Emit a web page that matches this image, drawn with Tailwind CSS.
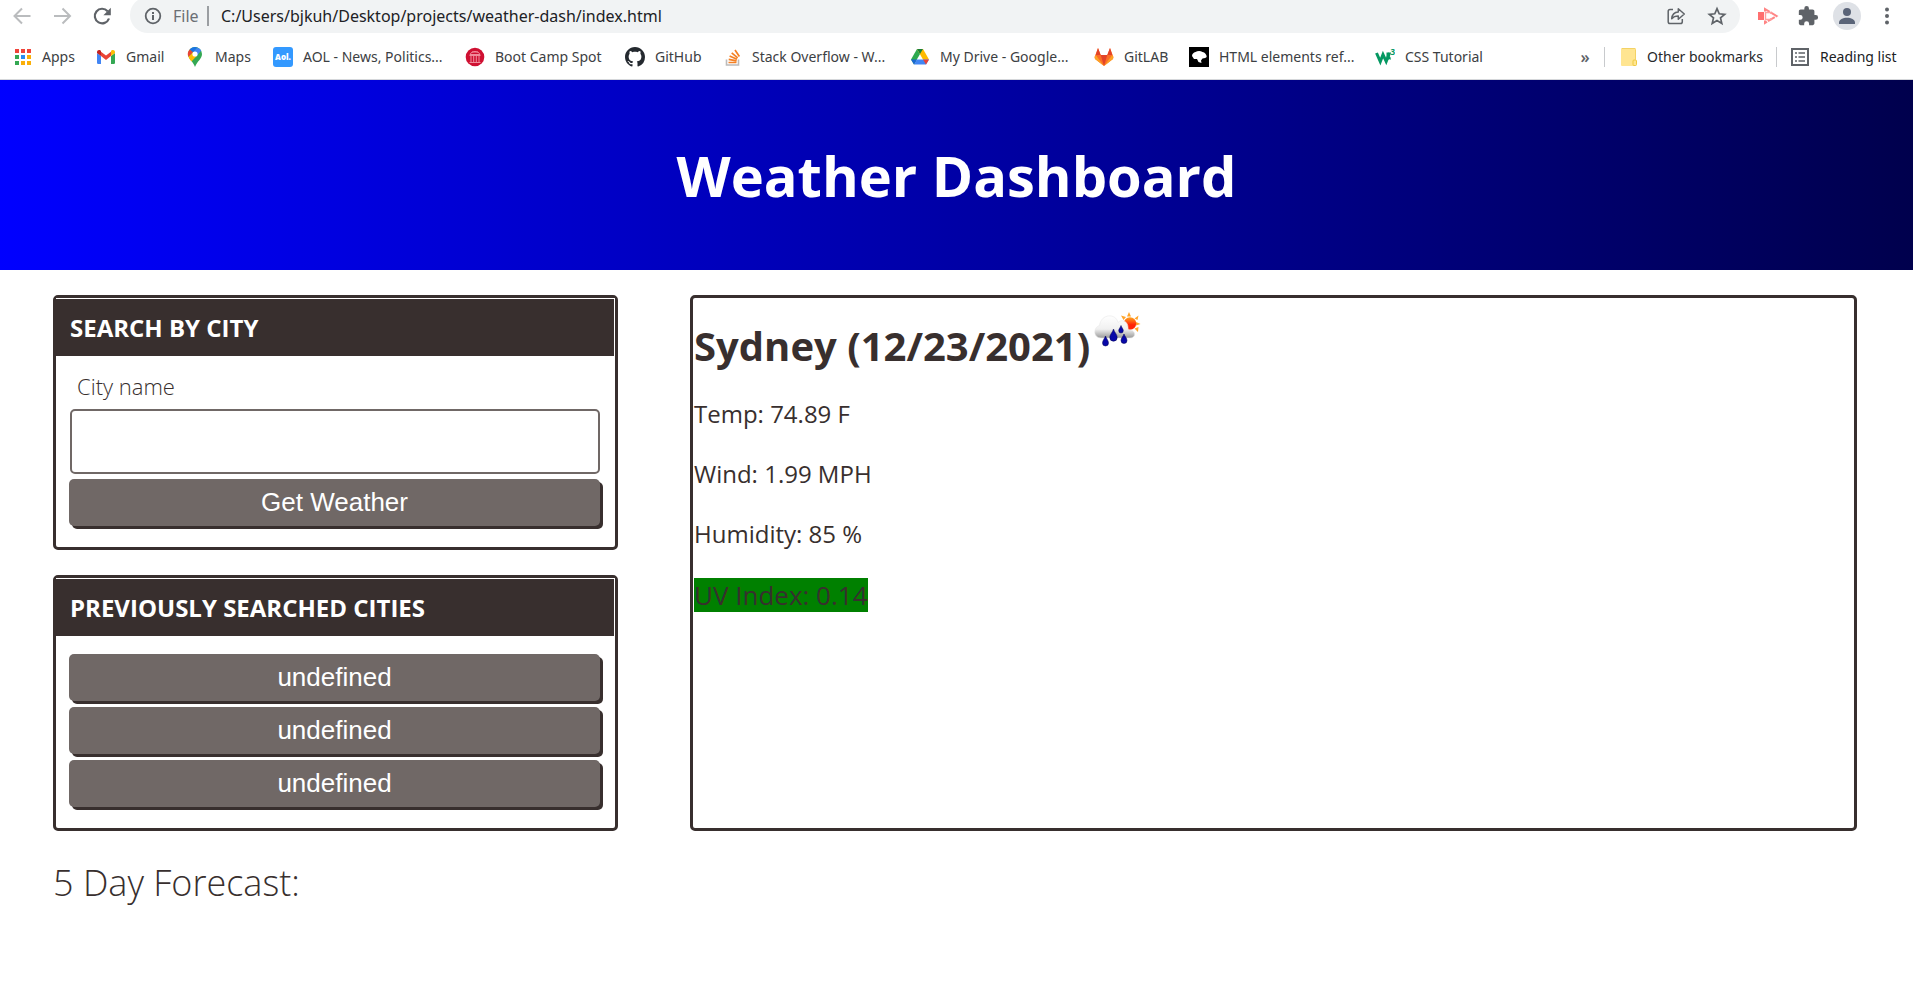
<!DOCTYPE html>
<html lang="en">
<head>
<meta charset="utf-8">
<title>Weather Dashboard</title>
<script src="https://cdn.jsdelivr.net/npm/@tailwindcss/browser@4"></script>
</head>
<body class="min-h-screen bg-white font-['Open_Sans','Noto_Sans',sans-serif] text-[#382f2e]">
<div class="overflow-hidden border-b border-[#d5d7da] bg-white font-['Noto_Sans',sans-serif] text-[#3c4043]">
  <div class="flex h-[34px] items-center">
    <nav class="flex h-8 w-[130px] shrink-0 items-center gap-5 self-start pl-3 text-[#babcbe]" aria-label="Navigation">
      <button aria-label="Back"><svg class="size-5" viewBox="0 0 20 20" fill="none" stroke="currentColor" stroke-width="2"><path d="M18.500 10H3M10 2.500L2.500 10l7.500 7.500"/></svg></button>
      <button aria-label="Forward"><svg class="size-5" viewBox="0 0 20 20" fill="none" stroke="currentColor" stroke-width="2"><path d="M2 10h15.500M10.500 2.500L18 10l-7.500 7.500"/></svg></button>
      <button class="text-[#5f6368]" aria-label="Reload"><svg class="size-5" viewBox="0 0 20 20"><path d="M17 12.500A7.300 7.300 0 1 1 15.600 5.200" fill="none" stroke="currentColor" stroke-width="2.200"/><path d="M18.800 1.800v7.400h-7.400z" fill="currentColor"/></svg></button>
    </nav>
    <div class="-mt-1 flex h-9 flex-1 items-center rounded-full bg-[#f1f3f4] pt-[2px] pr-[13px] pl-[14px]">
      <svg class="size-[18px] shrink-0" viewBox="0 0 18 18"><circle cx="9" cy="9" r="7.300" fill="none" stroke="#5f6368" stroke-width="1.800"/><path d="M8 8h2v5H8zM8 5h2v2H8z" fill="#5f6368"/></svg>
      <span class="ml-[11px] w-[34px] text-base text-[#6b6f74]">File</span>
      <span class="h-5 w-[2px] bg-[#9b9ea2]"></span>
      <span class="ml-3 flex-1 text-base whitespace-nowrap text-[#202124]">C:/Users/bjkuh/Desktop/projects/weather-dash/index.html</span>
      <button aria-label="Share"><svg class="size-5" viewBox="0 0 20 20" fill="none" stroke="#5f6368" stroke-width="1.500" stroke-linejoin="round"><path d="M7 3.500H4a1.800 1.800 0 0 0-1.800 1.800v10.400A1.800 1.800 0 0 0 4 17.500h10.500a1.800 1.800 0 0 0 1.800-1.800V13"/><path d="M5.700 12.700c.4-4.300 2.800-6.500 6.600-6.700V2.700l6 5.300-6 5.200V10c-3 0-5 .7-6.600 2.700z"/></svg></button>
      <button class="ml-[21px]" aria-label="Bookmark this page"><svg class="size-5" viewBox="0 0 20 20" fill="none" stroke="#5f6368" stroke-width="1.700"><path d="M10 2.700l2.200 5.100 5.500.5-4.200 3.600 1.300 5.500-4.800-2.900-4.800 2.900 1.300-5.500-4.200-3.600 5.500-.5z"/></svg></button>
    </div>
    <div class="flex h-8 w-[173px] shrink-0 items-center self-start pl-[17px]">
      <button aria-label="Screen recorder"><svg class="h-[18px] w-[22px]" viewBox="0 0 22 18"><path d="M1 5h6v8H1z" fill="#ff7070"/><path d="M8 4.500V2l11.500 7L8 16v-2.500" fill="none" stroke="#ff8585" stroke-width="2" stroke-dasharray="8 1"/><path d="M14 7V5.500H8.500v7H14V11" fill="none" stroke="#ffa0a0" stroke-width="1.400"/></svg></button>
      <button class="ml-[18px]" aria-label="Extensions"><svg class="size-[22px]" viewBox="0 0 24 24" fill="#5f6368"><path d="M20.500 11H19V7c0-1.100-.9-2-2-2h-4V3.500a2.500 2.500 0 0 0-5 0V5H4c-1.100 0-2 .9-2 2v3.800h1.500a2.700 2.700 0 0 1 0 5.400H2V20c0 1.100.9 2 2 2h3.800v-1.500a2.700 2.700 0 0 1 5.400 0V22H17c1.100 0 2-.9 2-2v-4h1.500a2.500 2.500 0 0 0 0-5z"/></svg></button>
      <button class="ml-[14px]" aria-label="Profile"><svg class="size-7" viewBox="0 0 28 28"><circle cx="14" cy="14" r="14" fill="#dee1e6"/><circle cx="14" cy="10" r="4" fill="#5a6478"/><path d="M6 22v-1.500c0-3 4-4.800 8-4.800s8 1.800 8 4.800V22z" fill="#5a6478"/></svg></button>
      <button class="ml-4" aria-label="Menu"><svg class="size-5" viewBox="0 0 20 20" fill="#5f6368"><circle cx="10" cy="3.500" r="2"/><circle cx="10" cy="10" r="2"/><circle cx="10" cy="16.500" r="2"/></svg></button>
    </div>
  </div>
  <nav class="flex h-[45px] items-center pl-[14px] text-sm whitespace-nowrap" aria-label="Bookmarks">
    <a href="#" class="flex w-[82px] items-center gap-[10px]"><svg class="size-[18px] shrink-0" viewBox="0 0 18 18"><path d="M1 1h4v4H1zM7 1h4v4H7zM13 1h4v4h-4z" fill="#f0443a"/><path d="M1 7h4v4H1z" fill="#34a853"/><path d="M7 7h4v4H7z" fill="#2a8bf2"/><path d="M13 7h4v4h-4z" fill="#fbaf08"/><path d="M1 13h4v4H1z" fill="#34a853"/><path d="M7 13h4v4H7zM13 13h4v4h-4z" fill="#fbaf08"/></svg>Apps</a>
    <a href="#" class="flex w-[89px] items-center gap-[10px]"><svg class="size-5 shrink-0" viewBox="0 0 20 20"><path d="M1 6l4 3v8H2.200A1.200 1.200 0 0 1 1 15.800z" fill="#4285f4"/><path d="M15 9l4-3v9.800a1.200 1.200 0 0 1-1.200 1.200H15z" fill="#34a853"/><path d="M5 4.800l5 3.800 5-3.800V9l-5 4-5-4z" fill="#ea4335"/><path d="M1 6V5c0-2 2-2.600 3.300-1.700L5 3.900V9z" fill="#c5221f"/><path d="M15 9V3.900l.7-.6C17 2.400 19 3 19 5v1z" fill="#fbbc04"/></svg>Gmail</a>
    <a href="#" class="flex w-[88px] items-center gap-[10px]"><svg class="size-5 shrink-0" viewBox="0 0 20 20"><path d="M10 0a7 7 0 0 1 7 7c0 5-5 7-7 13C8 14 3 12 3 7a7 7 0 0 1 7-7z" fill="#34a853"/><path d="M10 0C7.800 0 6 1 4.700 2.500L8 5.300 12.300.4A8 8 0 0 0 10 0z" fill="#1a73e8"/><path d="M4.700 2.500A6.700 6.700 0 0 0 3.500 10L8 5.200z" fill="#ea4335"/><path d="M12.300.4L8 5.300l3.800 3.600L16.200 3.600A7 7 0 0 0 12.300.4z" fill="#4285f4"/><path d="M3.500 9.800L8 5.200l3.700 3.800-5.200 5.500c-1.300-1.600-2.400-2.800-3-4.700z" fill="#fbbc04"/><circle cx="10" cy="7" r="2.600" fill="#fff"/></svg>Maps</a>
    <a href="#" class="flex w-[192px] items-center gap-[10px]"><svg class="size-5 shrink-0" viewBox="0 0 20 20"><rect width="20" height="20" rx="3" fill="#3399ff"/><text x="10" y="13" text-anchor="middle" font-family="Open Sans" font-weight="800" font-size="8" fill="#fff">Aol.</text></svg>AOL - News, Politics...</a>
    <a href="#" class="flex w-[160px] items-center gap-[10px]"><svg class="size-5 shrink-0" viewBox="0 0 20 20"><circle cx="10" cy="10" r="9.300" fill="#cf1032"/><path d="M5 7.500C6.500 3.500 13.500 3.500 15 7.500zM4.500 8.500h11M6 9v6M8.700 9v6M11.300 9v6M14 9v6M4.500 15.500h11M7 5h6" fill="none" stroke="#f08a9a" stroke-width="1"/></svg>Boot Camp Spot</a>
    <a href="#" class="flex w-[97px] items-center gap-[10px]"><svg class="size-5 shrink-0" viewBox="0 0 16 16" fill="#24292f"><path d="M8 0C3.580 0 0 3.580 0 8c0 3.540 2.290 6.530 5.470 7.590.4.070.55-.17.55-.38 0-.19-.01-.82-.01-1.490-2.010.37-2.530-.49-2.690-.94-.09-.23-.48-.94-.82-1.130-.28-.15-.68-.52-.01-.53.63-.01 1.080.58 1.230.82.72 1.210 1.870.87 2.330.66.07-.52.28-.87.51-1.070-1.780-.2-3.640-.89-3.640-3.950 0-.87.31-1.590.82-2.150-.08-.2-.36-1.020.08-2.120 0 0 .67-.21 2.200.82.64-.18 1.320-.27 2-.27s1.360.09 2 .27c1.530-1.040 2.200-.82 2.200-.82.44 1.100.16 1.920.08 2.120.51.56.82 1.270.82 2.150 0 3.070-1.870 3.750-3.650 3.950.29.25.54.73.54 1.480 0 1.070-.01 1.930-.01 2.200 0 .21.15.46.55.38A8.010 8.010 0 0 0 16 8c0-4.420-3.580-8-8-8z"/></svg>GitHub</a>
    <a href="#" class="flex w-[188px] items-center gap-[10px]"><svg class="size-5 shrink-0" viewBox="0 0 20 20" fill="none"><path d="M4.500 12.500V18h12v-5.500" stroke="#bcbbbb" stroke-width="1.600"/><path d="M6.500 15.500h8M6.700 12.300l7.900 1.500M7.600 9l7.400 3.200M9.700 5.800l6 5M13 3l4.400 6.500" stroke="#f48024" stroke-width="1.700"/></svg>Stack Overflow - W...</a>
    <a href="#" class="flex w-[184px] items-center gap-[10px]"><svg class="size-5 shrink-0" viewBox="0 0 20 20"><path d="M7 2L1 12.500 4 17.500l6-10.400z" fill="#2da94f"/><path d="M7 2h6l6 10.500h-6z" fill="#ffba00"/><path d="M4 17.500l3-5h12l-3 5z" fill="#4086f4"/><path d="M1 12.500L4 17.500l3-5z" fill="#1967d2"/><path d="M7 2h6l-3 5.100z" fill="#188038"/><path d="M13 12.500h6l-3 5z" fill="#ea4335"/></svg>My Drive - Google...</a>
    <a href="#" class="flex w-[95px] items-center gap-[10px]"><svg class="size-5 shrink-0" viewBox="0 0 20 20"><path d="M10 19L1 12l-.4-2L4 1l2.700 7h6.600L16 1l3.400 9-.4 2z" fill="#fc6d26"/><path d="M10 19L6.700 8h6.600z" fill="#e24329"/><path d="M10 19L1 12l-.4-2 1.100-2zM10 19l9-7 .4-2-1.100-2z" fill="#fca326"/><path d="M4 1l2.700 7h-5zM16 1l-2.700 7h5z" fill="#e24329"/></svg>GitLAB</a>
    <a href="#" class="flex w-[186px] items-center gap-[10px]"><svg class="size-5 shrink-0" viewBox="0 0 20 20"><path d="M0 0h20v20H0z" fill="#000"/><path d="M3 9c0-2 1.500-3.500 3.500-4 2-1.200 5-1.300 7 0 2.300.4 4.300 2.500 4.200 5l-1.500 1-2.700.5-1.500 2 .5 2.500-3-1-1.500-3H5z" fill="#fff"/></svg>HTML elements ref...</a>
    <a href="#" class="flex items-center gap-[10px]"><svg class="size-5 shrink-0" viewBox="0 0 20 20"><path d="M1.500 6L5.300 14.500 8 7.500l3.200 7L14.500 6" fill="none" stroke="#059862" stroke-width="3"/><path d="M11.500 5.500h4.700L14 9c1.500.5 2.200 2 1.500 4l-1.500-1-2.500 3z" fill="#059862"/><text x="15.500" y="8" font-family="Open Sans" font-weight="700" font-size="8" fill="#059862">3</text></svg>CSS Tutorial</a>
    <button class="ml-auto w-6 text-base leading-5 font-semibold text-[#5f6368]" aria-label="More bookmarks">»</button>
    <span class="ml-[7px] h-5 w-px bg-[#c8cacd]"></span>
    <a href="#" class="ml-[14px] flex w-[157px] items-center gap-2 text-[#27292c]"><svg class="size-5 shrink-0" viewBox="0 0 20 20"><path d="M2 2a1 1 0 0 1 1-1h13a1 1 0 0 1 1 1v16a1 1 0 0 1-1 1H3a1 1 0 0 1-1-1z" fill="#ffe591"/><path d="M16.500 12.500V2.500M3 1.500h13" stroke="#f3d265" fill="none"/><rect x="14" y="13" width="3.500" height="5.500" rx="1" fill="#ffe591" stroke="#eec940"/></svg>Other bookmarks</a>
    <span class="h-5 w-px bg-[#c8cacd]"></span>
    <button class="ml-[14px] flex w-[122px] items-center gap-[11px] text-[#202124]"><svg class="size-[18px] shrink-0" viewBox="0 0 18 18"><path d="M1 1h16v16H1z" fill="none" stroke="#5f6368" stroke-width="2"/><path d="M4 5h2M4 9h2M4 13h2M7.500 5H14M7.500 9H14M7.500 13H14" stroke="#5f6368" stroke-width="1.700"/></svg>Reading list</button>
  </nav>
</div>

<header class="flex h-[190px] items-center justify-center bg-[linear-gradient(90deg,#0000ff,#00004d)]">
  <h1 class="text-[56px] leading-[78px] font-bold text-white">Weather Dashboard</h1>
</header>

<main class="pt-[25px] pr-14 pl-[53px]">
  <div class="grid grid-cols-[565fr_1167fr] gap-x-[72px]">
    <div class="flex flex-col gap-[25px]">
      <section class="rounded-[5px] border-3 border-[#382f2e]">
        <h2 class="border-t border-r border-white bg-[#382f2e] px-[14px] py-[14px] pb-[13px] text-2xl leading-[30px] font-bold text-white">SEARCH BY CITY</h2>
        <form class="flex flex-col pt-[14px] pr-[15px] pb-[21px] pl-[13px]">
          <label for="city" class="ml-2 text-[22px] leading-8 font-light">City name</label>
          <input id="city" type="text" class="ml-px mt-[7px] h-[65px] rounded-[5px] border-2 border-[#706866] px-3 text-2xl">
          <button type="button" class="mt-[5px] h-[47px] rounded-[5px] bg-[#706866] font-['Liberation_Sans',Arial,sans-serif] text-[26px] text-white shadow-[3px_3px_0_#382f2e]">Get Weather</button>
        </form>
      </section>
      <section class="rounded-[5px] border-3 border-[#382f2e]">
        <h2 class="border-t border-r border-white bg-[#382f2e] px-[14px] py-[14px] pb-[13px] text-2xl leading-[30px] font-bold text-white">PREVIOUSLY SEARCHED CITIES</h2>
        <div class="flex flex-col gap-[6px] pt-[18px] pr-[15px] pb-[21px] pl-[13px] font-['Liberation_Sans',Arial,sans-serif] text-[26px] text-white">
          <button class="h-[47px] rounded-[5px] bg-[#706866] shadow-[3px_3px_0_#382f2e]">undefined</button>
          <button class="h-[47px] rounded-[5px] bg-[#706866] shadow-[3px_3px_0_#382f2e]">undefined</button>
          <button class="h-[47px] rounded-[5px] bg-[#706866] shadow-[3px_3px_0_#382f2e]">undefined</button>
        </div>
      </section>
    </div>
    <section class="rounded-[5px] border-3 border-[#382f2e] pl-px">
      <div class="flex items-start gap-1 pt-[14px]">
        <h2 class="pt-1 text-[40px] leading-[60px] font-bold">Sydney (12/23/2021)</h2>
        <svg class="h-[38px] w-[48px]" viewBox="0 0 48 38" role="img" aria-label="Rain with sun">
          <defs>
            <linearGradient id="cloud" x1="0" y1="0" x2="0" y2="1"><stop offset="0" stop-color="#fff"/><stop offset=".6" stop-color="#f0f0f0"/><stop offset="1" stop-color="#999"/></linearGradient>
            <linearGradient id="sun" x1="0" y1="0" x2="0" y2="1"><stop offset="0" stop-color="#ffa51f"/><stop offset=".6" stop-color="#ff2408"/></linearGradient>
          </defs>
          <g fill="#ffa52b"><path d="M33 4.500L35 0l2 4.500zM40.500 6.500l4-3-1 4.500zM42 10l4.500 2-4.500 1.500zM40.500 16.500l3.500 3.500.5-5zM29.500 8L27 3.500l5 1.500z"/></g>
          <circle cx="36" cy="11.500" r="6.200" fill="url(#sun)"/>
          <path d="M7 26C-1.500 25.500-.5 15 5.500 13.500 7 1.500 22 1 24 10.500c4-4 10-1 10 5 .3 1 0 1.500 0 2.500 8-1 9 8 2 8z" fill="url(#cloud)" stroke="#e8e8e8" stroke-width=".6"/>
          <g fill="#0808a8" stroke="#000050" stroke-width=".5"><path d="M11.500 24c.8 2.500 3 4.500 3 7a3 3 0 0 1-6 0c0-2.500 2.200-4.500 3-7zM19.500 17c1 3.500 3.700 5.500 3.700 8.500a3.700 3.700 0 0 1-7.400 0c0-3 2.700-5 3.700-8.500zM27 13.500c.6 2 2.300 3.300 2.300 5.200a2.300 2.300 0 0 1-4.600 0c0-1.900 1.700-3.200 2.300-5.200zM30 22c.8 2.500 3 4 3 6.500a3 3 0 0 1-6 0c0-2.500 2.200-4 3-6.500z"/></g>
        </svg>
      </div>
      <div class="text-2xl leading-9">
        <p class="mt-5">Temp: 74.89 F</p>
        <p class="mt-6">Wind: 1.99 MPH</p>
        <p class="mt-6">Humidity: 85 %</p>
        <p class="mt-[26px] w-fit bg-[#008000] text-[26px] leading-[34px]">UV Index: 0.14</p>
      </div>
    </section>
  </div>
  <h3 class="mt-7 text-4xl leading-12 font-light">5 Day Forecast:</h3>
</main>
</body>
</html>
